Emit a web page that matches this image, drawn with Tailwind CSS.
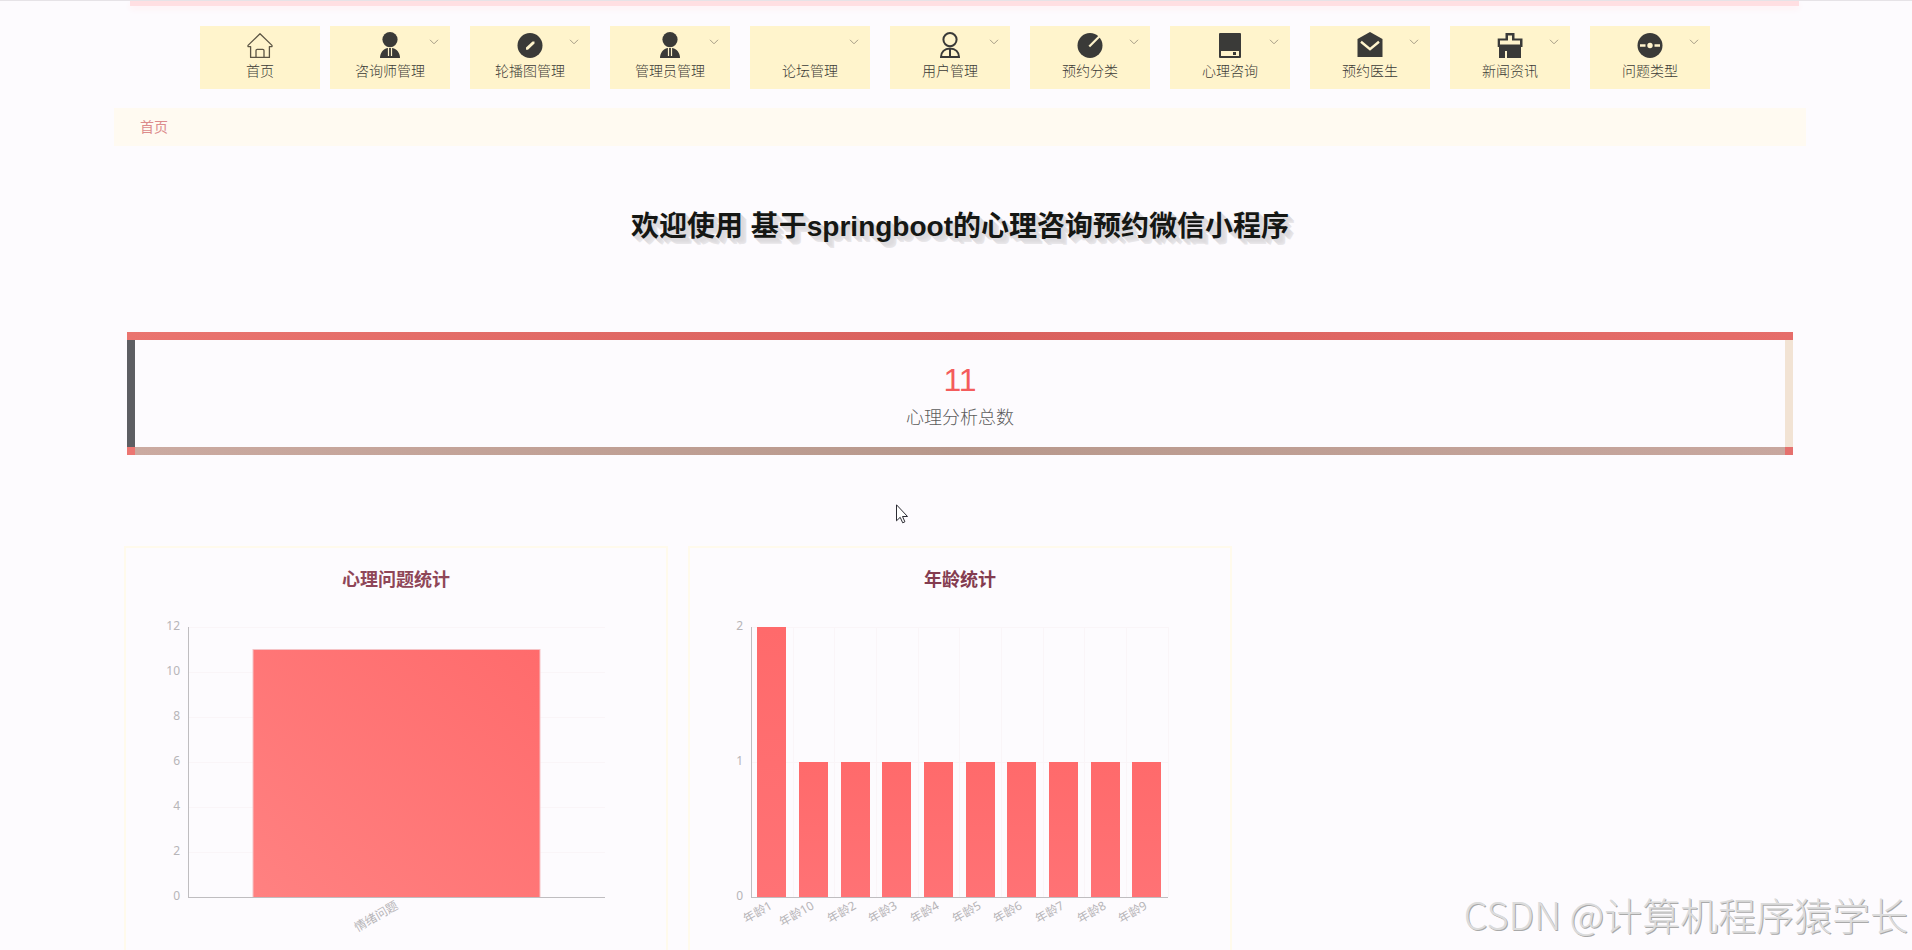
<!DOCTYPE html>
<html lang="zh-CN">
  <head>
    <meta charset="UTF-8" />
    <meta name="viewport" content="width=device-width, initial-scale=1.0" />
    <script src="https://cdn.jsdelivr.net/npm/@tailwindcss/browser@4"></script>
    <title>基于springboot的心理咨询预约微信小程序</title>
  </head>
  <body
    class="relative h-screen overflow-hidden bg-[#fdfbfe] border-t border-[#e6e3e7] font-['Liberation_Sans','Noto_Sans_CJK_SC',sans-serif] text-[#3b3a36]"
  >
    <header>
      <div
        class="h-[5px] ml-[130px] mr-[113px] bg-[#ffdfe2] shadow-[0_3px_6px_#fff0f3]"
      ></div>
      <nav class="mt-5 pr-0.5 flex justify-center text-sm leading-5 font-light">
        <a
          href="#"
          class="w-[120px] h-[63px] mr-2.5 pt-[5px] flex flex-col items-center gap-0.5 bg-[#fff4cc]"
        >
          <svg class="size-7" viewBox="0 0 28 28" fill="none" stroke="#5c5544" stroke-width="1.3" stroke-linejoin="round">
            <path d="M14 2.8 2 14.4v1.2h2.6v10.8h18.8V15.6H26v-1.2zM10 26v-6.5q0-1.2 1.2-1.2h5.6q1.2 0 1.2 1.2V26" />
          </svg>
          首页
        </a>
        <div class="flex gap-5">
          <button
            type="button"
            class="relative w-[120px] h-[63px] pt-[5px] flex flex-col items-center gap-0.5 bg-[#fff4cc]"
          >
            <svg class="size-7" viewBox="0 0 28 28" fill="#3a3a38">
              <circle cx="14" cy="8.6" r="7.6" />
              <path d="M4 27c0-5 3-9 7.6-10h4.800c4.600 1 7.600 5 7.600 10z" />
              <path d="M12.500 17v8M15.500 17v8" stroke="#fff4cc" stroke-width="1.200" />
            </svg>
            咨询师管理
            <svg class="absolute right-[11px] top-[13px] w-2.5 h-1.5" viewBox="0 0 10 6" fill="none" stroke="#a59c85"><path d="M1 .8l4 4 4-4" /></svg>
          </button>
          <button
            type="button"
            class="relative w-[120px] h-[63px] pt-[5px] flex flex-col items-center gap-0.5 bg-[#fff4cc]"
          >
            <svg class="size-7" viewBox="0 0 28 28" fill="#3a3a38">
              <circle cx="14" cy="14.5" r="12.5" />
              <path d="M10 18.800v-2.300l6.500-6h2v2l-6.500 6.300z" fill="#fff4cc" />
            </svg>
            轮播图管理
            <svg class="absolute right-[11px] top-[13px] w-2.5 h-1.5" viewBox="0 0 10 6" fill="none" stroke="#a59c85"><path d="M1 .8l4 4 4-4" /></svg>
          </button>
          <button
            type="button"
            class="relative w-[120px] h-[63px] pt-[5px] flex flex-col items-center gap-0.5 bg-[#fff4cc]"
          >
            <svg class="size-7" viewBox="0 0 28 28" fill="#3a3a38">
              <circle cx="14" cy="8.6" r="7.6" />
              <path d="M4 27c0-5 3-9 7.6-10h4.800c4.600 1 7.600 5 7.600 10z" />
              <path d="M12.500 17v8M15.500 17v8" stroke="#fff4cc" stroke-width="1.200" />
            </svg>
            管理员管理
            <svg class="absolute right-[11px] top-[13px] w-2.5 h-1.5" viewBox="0 0 10 6" fill="none" stroke="#a59c85"><path d="M1 .8l4 4 4-4" /></svg>
          </button>
          <button
            type="button"
            class="relative w-[120px] h-[63px] pt-[5px] flex flex-col items-center gap-0.5 bg-[#fff4cc]"
          >
            <span class="size-7"></span>
            论坛管理
            <svg class="absolute right-[11px] top-[13px] w-2.5 h-1.5" viewBox="0 0 10 6" fill="none" stroke="#a59c85"><path d="M1 .8l4 4 4-4" /></svg>
          </button>
          <button
            type="button"
            class="relative w-[120px] h-[63px] pt-[5px] flex flex-col items-center gap-0.5 bg-[#fff4cc]"
          >
            <svg class="size-7" viewBox="0 0 28 28" fill="none" stroke="#3a3a38" stroke-width="2">
              <circle cx="14" cy="8.6" r="6.6" />
              <path d="M5 26c0-5 3.500-8.500 9-8.500s9 3.500 9 8.500zM14 18v8" />
            </svg>
            用户管理
            <svg class="absolute right-[11px] top-[13px] w-2.5 h-1.5" viewBox="0 0 10 6" fill="none" stroke="#a59c85"><path d="M1 .8l4 4 4-4" /></svg>
          </button>
          <button
            type="button"
            class="relative w-[120px] h-[63px] pt-[5px] flex flex-col items-center gap-0.5 bg-[#fff4cc]"
          >
            <svg class="size-7" viewBox="0 0 28 28" fill="#3a3a38">
              <circle cx="14" cy="14.5" r="12.5" />
              <path d="M13.300 15.500L24 4.800" stroke="#fff4cc" stroke-width="2.200" />
            </svg>
            预约分类
            <svg class="absolute right-[11px] top-[13px] w-2.5 h-1.5" viewBox="0 0 10 6" fill="none" stroke="#a59c85"><path d="M1 .8l4 4 4-4" /></svg>
          </button>
          <button
            type="button"
            class="relative w-[120px] h-[63px] pt-[5px] flex flex-col items-center gap-0.5 bg-[#fff4cc]"
          >
            <svg class="size-7" viewBox="0 0 28 28" fill="#3a3a38">
              <rect x="3" y="2" width="22" height="25" rx="1" />
              <path d="M5 20h18v5H5z" fill="#fff4cc" />
              <path d="M17 21h3v3h-3z" />
            </svg>
            心理咨询
            <svg class="absolute right-[11px] top-[13px] w-2.5 h-1.5" viewBox="0 0 10 6" fill="none" stroke="#a59c85"><path d="M1 .8l4 4 4-4" /></svg>
          </button>
          <button
            type="button"
            class="relative w-[120px] h-[63px] pt-[5px] flex flex-col items-center gap-0.5 bg-[#fff4cc]"
          >
            <svg class="size-7" viewBox="0 0 28 28" fill="#3a3a38">
              <path d="M14 1l12.500 7v18h-25V8z" />
              <path d="M5 10.800l9 7.400 9-7.400" fill="none" stroke="#fff4cc" stroke-width="2.400" />
            </svg>
            预约医生
            <svg class="absolute right-[11px] top-[13px] w-2.5 h-1.5" viewBox="0 0 10 6" fill="none" stroke="#a59c85"><path d="M1 .8l4 4 4-4" /></svg>
          </button>
          <button
            type="button"
            class="relative w-[120px] h-[63px] pt-[5px] flex flex-col items-center gap-0.5 bg-[#fff4cc]"
          >
            <svg class="size-7" viewBox="0 0 28 28" fill="#3a3a38">
              <path d="M9.500 2h9v5.500h8V16H25v11H11v-7H9v7H3V16H1.700V7.500h7.800z" />
              <path d="M12 4.500h4v5h8v4H4v-4h8z" fill="#fff4cc" />
            </svg>
            新闻资讯
            <svg class="absolute right-[11px] top-[13px] w-2.5 h-1.5" viewBox="0 0 10 6" fill="none" stroke="#a59c85"><path d="M1 .8l4 4 4-4" /></svg>
          </button>
          <button
            type="button"
            class="relative w-[120px] h-[63px] pt-[5px] flex flex-col items-center gap-0.5 bg-[#fff4cc]"
          >
            <svg class="size-7" viewBox="0 0 28 28" fill="#3a3a38">
              <circle cx="14" cy="14.5" r="12.5" />
              <circle cx="14" cy="14.5" r="2.7" fill="#fff4cc" />
              <path d="M4 14.500h5.500M18.500 14.500H24" stroke="#fff4cc" stroke-width="2.400" />
            </svg>
            问题类型
            <svg class="absolute right-[11px] top-[13px] w-2.5 h-1.5" viewBox="0 0 10 6" fill="none" stroke="#a59c85"><path d="M1 .8l4 4 4-4" /></svg>
          </button>
        </div>
      </nav>
    </header>

    <main class="ml-[114px] mr-[106px]">
      <div
        class="mt-[19px] h-[38px] px-[26px] flex items-center bg-[#fffaf1] text-sm text-[#dc8b8b]"
      >
        <a href="#">首页</a>
      </div>

      <h1
        class="mt-[61px] text-center text-[28px] leading-10 font-bold text-[#151714] [text-shadow:1px_1px_#dddbde,2px_2px_#dddbde,3px_3px_#dddbde,4px_4px_#e0dee1,5px_5px_#e4e2e5,6px_6px_#e8e6e9]"
      >
        欢迎使用 基于springboot的心理咨询预约微信小程序
      </h1>

      <!-- total count -->
      <section class="mt-[85px] mx-[13px]">
        <div
          class="h-2 bg-linear-to-r from-[#ea746f] via-[#d9605d] to-[#e66d6a]"
        ></div>
        <div
          class="h-[107px] pt-5 border-l-8 border-l-[#5d5e63] border-r-8 border-r-[#f2e3d4] text-center"
        >
          <p class="text-[32px] leading-10 text-[#f45c5c]">11</p>
          <p class="pt-1 text-lg leading-7 font-light text-[#5c5c5c]">心理分析总数</p>
        </div>
        <div class="flex h-2">
          <div class="w-2 bg-[#ec7672]"></div>
          <div
            class="grow bg-linear-to-r from-[#cbaaa1] via-[#b8988c] to-[#c8a79f]"
          ></div>
          <div class="w-2 bg-[#e5706d]"></div>
        </div>
      </section>

      <!-- charts -->
      <section class="mt-[91px] mx-2.5 grid grid-cols-3 gap-5">
        <div class="h-[440px] border-2 border-[#fffaec]">
          <h2
            class="h-[60px] text-center text-lg leading-[64px] font-bold text-[#8f4658]"
          >
            心理问题统计
          </h2>
          <svg class="w-full" viewBox="0 0 540 360" font-size="12" fill="#b7b5b8">
            <defs>
              <linearGradient id="barFill" x1="1" y1="0" x2="0" y2="1">
                <stop offset="0" stop-color="#ff6b6c" />
                <stop offset="1" stop-color="#ff8181" />
              </linearGradient>
            </defs>
            <path
              d="M63 19.500h416M63 64.500h416M63 109.500h416M63 154.500h416M63 199.500h416M63 244.500h416"
              stroke="#faf5f8"
            />
            <rect x="127" y="41.500" width="287" height="248" fill="url(#barFill)" stroke="#f5c3c6" />
            <path d="M62.500 19v271M62 289.500h417" stroke="#bfbdc0" fill="none" />
            <g text-anchor="end" font-family="'Noto Sans', sans-serif">
              <text x="54" y="22">12</text>
              <text x="54" y="67">10</text>
              <text x="54" y="112">8</text>
              <text x="54" y="157">6</text>
              <text x="54" y="202">4</text>
              <text x="54" y="247">2</text>
              <text x="54" y="292">0</text>
            </g>
            <text transform="translate(273 300) rotate(-30)" text-anchor="end">情绪问题</text>
          </svg>
        </div>

        <div class="h-[440px] border-2 border-[#fffaec]">
          <h2
            class="h-[60px] text-center text-lg leading-[64px] font-bold text-[#843c50]"
          >
            年龄统计
          </h2>
          <svg class="w-full" viewBox="0 0 540 360" font-size="12" fill="#b7b5b8">
            <defs>
              <linearGradient id="barFill2" x1="0" y1="0" x2="0" y2="1">
                <stop offset="0" stop-color="#ff6a6b" />
                <stop offset="1" stop-color="#ff7275" />
              </linearGradient>
            </defs>
            <path
              d="M62 19.500h417M62 154.500h417M103.500 19v270M144.500 19v270M186.500 19v270M228.500 19v270M269.500 19v270M311.500 19v270M353.500 19v270M394.500 19v270M436.500 19v270M478.500 19v270"
              stroke="#faf5f8"
            />
            <g fill="url(#barFill2)">
              <rect x="67" y="19" width="29" height="270" />
              <rect x="109" y="154" width="29" height="135" />
              <rect x="151" y="154" width="29" height="135" />
              <rect x="192" y="154" width="29" height="135" />
              <rect x="234" y="154" width="29" height="135" />
              <rect x="276" y="154" width="29" height="135" />
              <rect x="317" y="154" width="29" height="135" />
              <rect x="359" y="154" width="29" height="135" />
              <rect x="401" y="154" width="29" height="135" />
              <rect x="442" y="154" width="29" height="135" />
            </g>
            <path d="M61.500 19v271M61 289.500h417" stroke="#bfbdc0" fill="none" />
            <g text-anchor="end" font-family="'Noto Sans', sans-serif">
              <text x="53" y="22">2</text>
              <text x="53" y="157">1</text>
              <text x="53" y="292">0</text>
            </g>
            <g text-anchor="end" font-family="'Noto Sans', 'Noto Sans CJK SC', sans-serif">
              <text transform="translate(83 300) rotate(-30)">年龄1</text>
              <text transform="translate(125 300) rotate(-30)">年龄10</text>
              <text transform="translate(167 300) rotate(-30)">年龄2</text>
              <text transform="translate(208 300) rotate(-30)">年龄3</text>
              <text transform="translate(250 300) rotate(-30)">年龄4</text>
              <text transform="translate(292 300) rotate(-30)">年龄5</text>
              <text transform="translate(333 300) rotate(-30)">年龄6</text>
              <text transform="translate(375 300) rotate(-30)">年龄7</text>
              <text transform="translate(417 300) rotate(-30)">年龄8</text>
              <text transform="translate(458 300) rotate(-30)">年龄9</text>
            </g>
          </svg>
        </div>
      </section>
    </main>

    <!-- mouse pointer -->
    <svg class="absolute left-[896px] top-[503px] w-3 h-5" viewBox="0 0 12 20" fill="#fff" stroke="#2b2b33">
      <path d="M.5.8v16l3.700-3.500 2.500 5.500 2.200-1-2.400-5.300h5z" />
    </svg>

    <p
      class="absolute right-1 bottom-2 text-[38px] leading-[56px] font-light whitespace-nowrap text-[#dcdcdc] [text-shadow:1px_1px_#a9a9a9] font-['Noto_Sans_CJK_SC',sans-serif]"
    >
      CSDN @计算机程序猿学长
    </p>
  </body>
</html>
